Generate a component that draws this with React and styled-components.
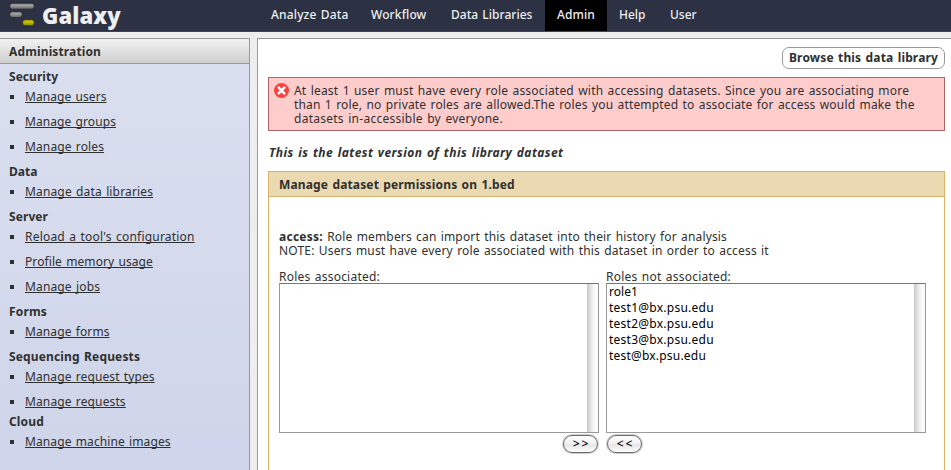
import React from 'react';
import styled, { createGlobalStyle } from 'styled-components';

const GlobalStyle = createGlobalStyle`
  * { box-sizing: border-box; }
  body {
    margin: 0;
    background: #eee;
    color: #303030;
    font: 12px/14px "Noto Sans", "Lucida Grande", sans-serif;
    word-spacing: 1px;
    overflow: hidden;
  }
`;

const Page = styled.div`
  display: flex;
  flex-direction: column;
  height: 470px;
`;

const Masthead = styled.header`
  display: flex;
  flex: none;
  height: 32px;
  background: #2c3143;
  border-bottom: 1px solid #444;
`;

const Brand = styled.div`
  display: flex;
  width: 256px;
  padding-left: 8px;
`;

const BrandName = styled.span`
  margin-left: 6px;
  color: #eee;
  font-size: 22px;
  font-weight: 900;
  line-height: 30px;
  letter-spacing: 0.1px;
`;

const Tabs = styled.nav`
  display: flex;
`;

const Tab = styled.a`
  width: ${(p) => p.$width}px;
  padding-left: ${(p) => p.$inset}px;
  background: ${(p) => (p.$active ? '#000' : 'transparent')};
  color: #eee;
  font-weight: 500;
  line-height: 29px;
  letter-spacing: ${(p) => p.$track}px;
  white-space: nowrap;
`;

const Columns = styled.div`
  display: flex;
  flex: 1;
  gap: 7px;
  padding-top: 6px;
  min-height: 0;
`;

const Sidebar = styled.aside`
  display: flex;
  flex-direction: column;
  width: 250px;
  border: solid #999;
  border-width: 1px 1px 0 0;
`;

const SidebarHead = styled.div`
  height: 25px;
  padding: 5px 0 0 9px;
  border-bottom: 1px solid #999;
  background: linear-gradient(#f2f2f2, #cfcfcf);
  font-weight: bold;
  line-height: 15px;
  letter-spacing: 0.13px;
`;

const SidebarBody = styled.div`
  flex: 1;
  padding: 5px 0 0 9px;
  background: linear-gradient(#dadfef, #cfd5ea);
  line-height: 15px;
`;

const SectionTitle = styled.div`
  height: 20px;
  font-weight: bold;
  letter-spacing: ${(p) => p.$track}px;
`;

const LinkList = styled.ul`
  list-style: none;
  margin: 0 0 ${(p) => (p.$tight ? '-5px' : '0')};
  padding: 0;
`;

const LinkItem = styled.li`
  display: flex;
  height: 25px;
  &::before {
    content: '';
    width: 4px;
    height: 4px;
    margin: 6px 11px 0 1px;
    background: #303030;
  }
`;

const SideLink = styled.a`
  white-space: nowrap;
  letter-spacing: ${(p) => p.$track}px;
  text-decoration: underline 1px;
  text-underline-offset: 1px;
  text-decoration-skip-ink: none;
`;

const Main = styled.main`
  flex: 1;
  display: flex;
  flex-direction: column;
  padding: 8px 6px 0 10px;
  border: solid #999;
  border-width: 1px 0 0 1px;
  background: #fff;
`;

const BrowseButton = styled.button`
  align-self: flex-end;
  flex: none;
  width: 163px;
  height: 22px;
  padding: 0 0 1px;
  border: 1px solid #999;
  border-radius: 7px;
  background: #fff;
  color: #303030;
  font: bold 12px/18px "Noto Sans", sans-serif;
  word-spacing: 1px;
  letter-spacing: 0.16px;
  white-space: nowrap;
`;

const ErrorMessage = styled.div`
  display: flex;
  flex: none;
  gap: 5px;
  height: 54px;
  margin-top: 8px;
  padding: 5px;
  border: 1px solid #aa6666;
  background: #fcc;
`;

const ErrorText = styled.div`
  padding-top: 1px;
`;

const Line = styled.div`
  height: 14px;
  white-space: nowrap;
  letter-spacing: ${(p) => p.$track}px;
`;

const Version = styled.div`
  margin: 15px 0 0 1px;
  height: 14px;
  font-weight: bold;
  font-style: italic;
  letter-spacing: 0.44px;
`;

const Form = styled.section`
  flex: 1;
  margin-top: 11px;
  border: 1px solid #d8b365;
  border-bottom: 0;
`;

const FormTitle = styled.div`
  height: 25px;
  padding: 6px 10px 4px;
  border-bottom: 1px solid #d8b365;
  background: #ebd9b2;
  font-weight: bold;
  letter-spacing: 0.15px;
`;

const FormBody = styled.div`
  padding: 33px 0 0 10px;
`;

const Strong = styled.b`
  letter-spacing: 0.25px;
`;

const Pickers = styled.div`
  display: flex;
  gap: 7px;
  margin-top: 12px;
`;

const Picker = styled.div`
  display: flex;
  flex-direction: column;
  align-items: ${(p) => (p.$end ? 'flex-end' : 'flex-start')};
  width: 320px;
`;

const PickerLabel = styled(Line)`
  align-self: flex-start;
  height: 13px;
`;

const ListBox = styled.div`
  width: 100%;
  height: 150px;
  padding: 0 2px;
  border: 1px solid #999;
  border-top-color: #777;
  background: linear-gradient(90deg, #c8c8c8, #ececec 45%, #fff 80%, #f8f8f8) right / 11px 100% no-repeat #fff;
  color: #000;
`;

const Option = styled.div`
  height: 16px;
  line-height: 15px;
  letter-spacing: ${(p) => p.$track}px;
`;

const MoveButton = styled.button`
  width: 35px;
  height: 18px;
  margin: 2px 1px 0;
  padding: 0;
  border: 1px solid #6a6a6a;
  border-radius: 9px;
  background: linear-gradient(#fff, #f2f2f2 45%, #e6e6e6 55%, #fff);
  box-shadow: 0 0 1px 1px rgba(0, 0, 0, 0.2);
  color: #000;
  font: 500 12px/16px "Noto Sans", sans-serif;
  letter-spacing: 2px;
  text-indent: 2px;
`;

const Logo = () => (
  <svg width="28" height="30" viewBox="0 0 28 30">
    <defs>
      <linearGradient id="silver" x1="0" y1="0" x2="0" y2="1">
        <stop offset="0" stopColor="#777" />
        <stop offset="0.35" stopColor="#a4a4a4" />
        <stop offset="1" stopColor="#606060" />
      </linearGradient>
      <linearGradient id="gold" x1="0" y1="0" x2="0" y2="1">
        <stop offset="0" stopColor="#a5a000" />
        <stop offset="0.35" stopColor="#c8c400" />
        <stop offset="1" stopColor="#8a8600" />
      </linearGradient>
    </defs>
    <g stroke="#1d2029" strokeWidth="0.7">
      <rect x="1.8" y="3.2" width="24.4" height="6" rx="2.8" fill="url(#silver)" />
      <rect x="1.8" y="11.6" width="12.4" height="6" rx="2.8" fill="url(#silver)" />
      <rect x="14.6" y="19.6" width="11.6" height="6.2" rx="2.8" fill="url(#gold)" />
    </g>
  </svg>
);

const ErrorIcon = () => (
  <svg width="15" height="16" viewBox="0 0 15 16">
    <circle cx="7.5" cy="7.5" r="7.5" fill="#ff3e3e" />
    <path d="M4.7 4.7l5.6 5.6M10.3 4.7l-5.6 5.6" stroke="#fff" strokeWidth="2.6" strokeLinecap="round" />
  </svg>
);

const tabs = [
  { label: 'Analyze Data', width: 100, inset: 15, track: 0.16 },
  { label: 'Workflow', width: 80, inset: 15, track: 0.12 },
  { label: 'Data Libraries', width: 109, inset: 15, track: 0.03 },
  { label: 'Admin', width: 62, inset: 12, track: 0.1, active: true },
  { label: 'Help', width: 48, inset: 12, track: 0 },
  { label: 'User', width: 60, inset: 15, track: 0 },
];

const sections = [
  ['Security', 0.03, [['Manage users', 0.07], ['Manage groups', 0.08], ['Manage roles', 0.12]]],
  ['Data', 0, [['Manage data libraries', 0.15]]],
  ['Server', 0.08, [["Reload a tool's configuration", 0.2], ['Profile memory usage', 0.09], ['Manage jobs', 0.14]]],
  ['Forms', 0.15, [['Manage forms', 0.1]]],
  ['Sequencing Requests', 0.15, [['Manage request types', 0.1], ['Manage requests', 0.12]], true],
  ['Cloud', 0.15, [['Manage machine images', 0.1]]],
];

const available = [
  ['role1', 0.05],
  ['test1@bx.psu.edu', 0.25],
  ['test2@bx.psu.edu', 0.25],
  ['test3@bx.psu.edu', 0.25],
  ['test@bx.psu.edu', 0.2],
];

export default function App() {
  return (
    <Page>
      <GlobalStyle />
      <Masthead>
        <Brand>
          <Logo />
          <BrandName>Galaxy</BrandName>
        </Brand>
        <Tabs>
          {tabs.map(({ label, width, inset, track, active }) => (
            <Tab key={label} $width={width} $inset={inset} $track={track} $active={active}>{label}</Tab>
          ))}
        </Tabs>
      </Masthead>
      <Columns>
        <Sidebar>
          <SidebarHead>Administration</SidebarHead>
          <SidebarBody>
            {sections.map(([title, track, links, tight]) => (
              <React.Fragment key={title}>
                <SectionTitle $track={track}>{title}</SectionTitle>
                <LinkList $tight={tight}>
                  {links.map(([label, t]) => (
                    <LinkItem key={label}><SideLink $track={t}>{label}</SideLink></LinkItem>
                  ))}
                </LinkList>
              </React.Fragment>
            ))}
          </SidebarBody>
        </Sidebar>
        <Main>
          <BrowseButton>Browse this data library</BrowseButton>
          <ErrorMessage>
            <ErrorIcon />
            <ErrorText>
              <Line $track={0.19}>At least 1 user must have every role associated with accessing datasets. Since you are associating more</Line>
              <Line $track={0.17}>than 1 role, no private roles are allowed.The roles you attempted to associate for access would make the</Line>
              <Line $track={0.26}>datasets in-accessible by everyone.</Line>
            </ErrorText>
          </ErrorMessage>
          <Version>This is the latest version of this library dataset</Version>
          <Form>
            <FormTitle>Manage dataset permissions on 1.bed</FormTitle>
            <FormBody>
              <Line $track={0.155}><Strong>access:</Strong> Role members can import this dataset into their history for analysis</Line>
              <Line $track={0.167}>NOTE: Users must have every role associated with this dataset in order to access it</Line>
              <Pickers>
                <Picker $end>
                  <PickerLabel $track={0.22}>Roles associated:</PickerLabel>
                  <ListBox />
                  <MoveButton>&gt;&gt;</MoveButton>
                </Picker>
                <Picker>
                  <PickerLabel $track={0.22}>Roles not associated:</PickerLabel>
                  <ListBox>
                    {available.map(([name, t]) => <Option key={name} $track={t}>{name}</Option>)}
                  </ListBox>
                  <MoveButton>&lt;&lt;</MoveButton>
                </Picker>
              </Pickers>
            </FormBody>
          </Form>
        </Main>
      </Columns>
    </Page>
  );
}
